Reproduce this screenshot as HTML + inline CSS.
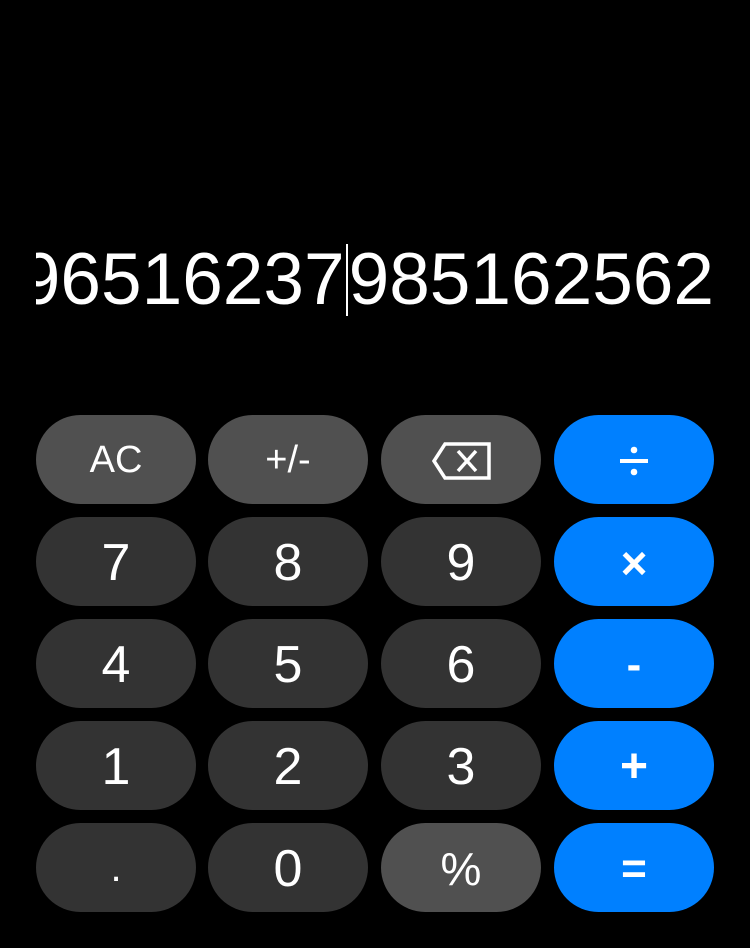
<!DOCTYPE html>
<html><head><meta charset="utf-8"><style>
html,body{margin:0;padding:0;background:#000;}
body{width:750px;height:948px;position:relative;overflow:hidden;font-family:"Liberation Sans",sans-serif;color:#fff;}
.disp{position:absolute;left:36px;top:230px;width:678px;height:100px;overflow:hidden;}
.disp .t{position:absolute;right:0;top:6px;font-size:73px;line-height:88px;white-space:nowrap;letter-spacing:0px;}
.cur{display:inline-block;width:2px;height:72px;background:#fff;vertical-align:-12px;margin:0 1px;}
.b{position:absolute;width:160px;height:89px;border-radius:45px;display:flex;align-items:center;justify-content:center;font-size:52px;padding-top:2px;box-sizing:border-box;}
.d{background:#333333;}
.g{background:#505050;}
.o{background:#0080ff;font-weight:bold;}
</style></head><body>
<div class="disp"><div class="t">96516237<span class="cur"></span>985162562</div></div>

<div class="b g" style="left:36px;top:415px;font-size:38px">AC</div>
<div class="b g" style="left:208px;top:415px;font-size:38px">+/-</div>
<div class="b g" style="left:381px;top:415px">
<svg width="60" height="40" viewBox="0 0 60 40"><path d="M14 3 L58 3 L58 37 L14 37 L3 20 Z" fill="none" stroke="#fff" stroke-width="3.5"/><path d="M27 10 L45 30 M45 10 L27 30" stroke="#fff" stroke-width="3.5"/></svg></div>
<div class="b o" style="left:554px;top:415px">
<svg width="30" height="32" viewBox="0 0 30 32"><circle cx="15" cy="5" r="3.3" fill="#fff"/><circle cx="15" cy="27" r="3.3" fill="#fff"/><rect x="1" y="14" width="28" height="4" fill="#fff"/></svg></div>

<div class="b d" style="left:36px;top:517px">7</div>
<div class="b d" style="left:208px;top:517px">8</div>
<div class="b d" style="left:381px;top:517px">9</div>
<div class="b o" style="left:554px;top:517px;font-size:46px">×</div>

<div class="b d" style="left:36px;top:619px">4</div>
<div class="b d" style="left:208px;top:619px">5</div>
<div class="b d" style="left:381px;top:619px">6</div>
<div class="b o" style="left:554px;top:619px;font-size:44px">-</div>

<div class="b d" style="left:36px;top:721px">1</div>
<div class="b d" style="left:208px;top:721px">2</div>
<div class="b d" style="left:381px;top:721px">3</div>
<div class="b o" style="left:554px;top:721px;font-size:48px">+</div>

<div class="b d" style="left:36px;top:823px;font-size:40px">.</div>
<div class="b d" style="left:208px;top:823px">0</div>
<div class="b g" style="left:381px;top:823px;font-size:46px">%</div>
<div class="b o" style="left:554px;top:823px;font-size:44px">=</div>
</body></html>
